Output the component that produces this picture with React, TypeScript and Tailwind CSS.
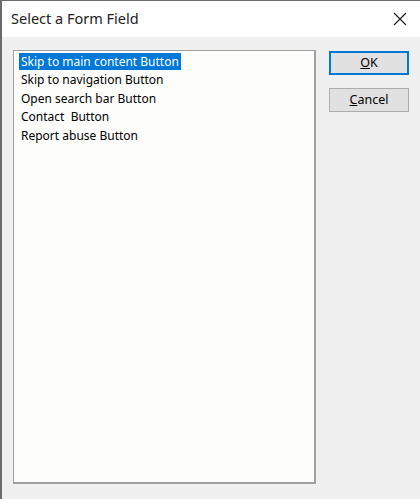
const items = [
  "Skip to main content Button",
  "Skip to navigation Button",
  "Open search bar Button",
  "Contact  Button",
  "Report abuse Button",
];

export default function App() {
  return (
    <div className="h-[499px] w-[420px] overflow-hidden border-l-2 border-t border-[#6b6b6b] bg-[#f0f0f0] font-['Liberation_Sans',Arial,sans-serif] text-black">
      <div className="flex h-[36px] items-center justify-between bg-white pl-[9px] pr-[10px]">
        <span className="font-['Noto_Sans',sans-serif] text-[14.5px] text-[#222]">Select a Form Field</span>
        <svg width="14" height="14" viewBox="0 0 14 14" className="mr-[3px]">
          <path d="M1 1L13 13M13 1L1 13" stroke="#222" strokeWidth="1.2" />
        </svg>
      </div>
      <div className="flex gap-[13px] pl-[11px] pt-[13px]">
        <div className="h-[434px] w-[303px] border border-[#a0a0a0] border-b-2 border-r-2 bg-[#fdfdfc] px-[5px] pt-[1px]">
          {items.map((t, i) => (
            <div key={i} className="flex h-[18.5px] items-center">
              <span
                className={
                  "whitespace-pre px-[2px] text-[12px] leading-[17px] " +
                  (i === 0 ? "bg-[#0078d7] text-white" : "")
                }
              >
                {t}
              </span>
            </div>
          ))}
        </div>
        <div className="flex flex-col gap-[13px] pt-[1px]">
          <button className="h-[24px] w-[80px] border-2 border-[#0078d7] bg-[#e1e1e1] font-['Liberation_Sans',Arial,sans-serif] text-[12.5px]">
            <u>O</u>K
          </button>
          <button className="h-[24px] w-[80px] border border-[#adadad] bg-[#e1e1e1] font-['Liberation_Sans',Arial,sans-serif] text-[12.5px]">
            <u>C</u>ancel
          </button>
        </div>
      </div>
    </div>
  );
}
